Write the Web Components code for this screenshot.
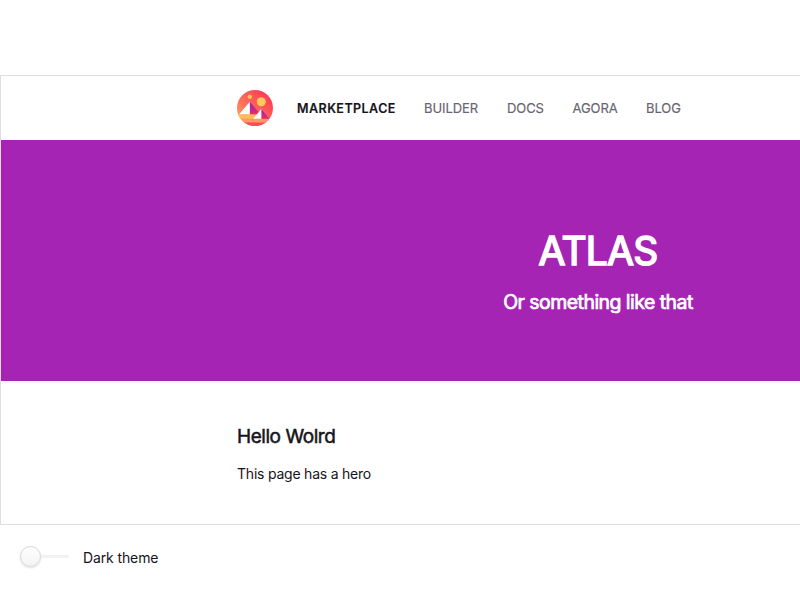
<!DOCTYPE html>
<html lang="en"><head><meta charset="utf-8"><title>Atlas</title>
<style>
html,body{margin:0;background:#fff;overflow:hidden}
body{width:800px;height:600px;font-family:Inter,"Liberation Sans",sans-serif;color:#16141a;font-size:14px}
</style></head><body>
<atlas-story>
<page-frame>
<nav-bar slot="nav">
<brand-logo slot="logo"></brand-logo>
<nav-item active style="--w:98.5px">MARKETPLACE</nav-item>
<nav-item style="--w:54.5px">BUILDER</nav-item>
<nav-item style="--w:37px">DOCS</nav-item>
<nav-item style="--w:45px">AGORA</nav-item>
<nav-item style="--w:35px">BLOG</nav-item>
</nav-bar>
<hero-banner slot="hero"><span slot="title">ATLAS</span><span slot="subtitle">Or something like that</span></hero-banner>
<page-content><span slot="title">Hello Wolrd</span><span>This page has a hero</span></page-content>
</page-frame>
<theme-toggle slot="footer">Dark theme</theme-toggle>
</atlas-story>
<script>
const define=(name,html)=>customElements.define(name,class extends HTMLElement{
  constructor(){super();this.attachShadow({mode:'open'}).innerHTML=html;}
});
define('atlas-story',`<style>:host{display:block;padding-top:75px;width:800px;height:600px;box-sizing:border-box;overflow:hidden}</style><slot></slot><slot name="footer"></slot>`);
define('page-frame',`<style>:host{display:block;width:1196px;height:450px;box-sizing:border-box;border:1px solid #dedede}</style><slot name="nav"></slot><slot name="hero"></slot><slot></slot>`);
define('nav-bar',`<style>:host{display:flex;height:64px;align-items:center;padding-left:236px}
nav{display:flex;gap:28.5px;margin-left:24px;padding-top:2px}</style><slot name="logo"></slot><nav><slot></slot></nav>`);
define('nav-item',`<style>:host{display:block;width:var(--w);white-space:nowrap;font-size:13px;line-height:18px;color:#676370;letter-spacing:-.08px;-webkit-text-stroke:.15px currentColor}
:host([active]){font-weight:600;color:#16141a;font-size:12.5px;line-height:20px;letter-spacing:.45px}</style><slot></slot>`);
define('brand-logo',`<style>:host{display:block;width:36px;height:36px}svg{display:block}</style>
<svg width="36" height="36" viewBox="0 0 36 36">
<defs>
<linearGradient id="bg" x1=".15" y1=".85" x2=".85" y2=".15"><stop offset="0" stop-color="#ff9a5a"/><stop offset=".35" stop-color="#ff7059"/><stop offset="1" stop-color="#ff3d56"/></linearGradient>
<linearGradient id="shade" x1="0" y1="0" x2="0" y2="1"><stop offset="0" stop-color="#a524b3"/><stop offset=".4" stop-color="#b0269f"/><stop offset="1" stop-color="#ee2c62"/></linearGradient>
<clipPath id="disc"><circle cx="18" cy="18" r="18"/></clipPath></defs>
<g clip-path="url(#disc)"><rect width="36" height="36" fill="url(#bg)"/>
<path fill="#ff4a55" d="M7 32h22v4H7z"/><path fill="#fc9965" d="M3 28.8h30l-4 3.8H7z"/>
<path fill="#ffbc5b" d="M0 24.3h24v4.5H0z"/>
<path fill="url(#shade)" d="M12.8 11.7v12.6h10.7z"/><path fill="#fff" d="M12.8 11.7v12.6H2.1z"/>
<path fill="url(#shade)" d="M24.3 18.9v9.9h8.2z"/><path fill="#fff" d="M24.3 18.9v9.9h-8.1z"/>
<circle cx="24.3" cy="11.7" r="4.5" fill="#ffc95b"/><circle cx="12.8" cy="6.8" r="2.2" fill="#ffc95b"/></g></svg>`);
define('hero-banner',`<style>:host{display:flex;flex-direction:column;align-items:center;height:241px;box-sizing:border-box;padding-top:85px;background:#a524b3;color:#fff}
h1{margin:0;font-size:39px;line-height:52px;font-weight:400;letter-spacing:-.8px;-webkit-text-stroke:1.6px currentColor}
h2{margin:12px 0 0;font-size:19.5px;line-height:26px;font-weight:400;letter-spacing:-.55px;-webkit-text-stroke:.7px currentColor}</style><h1><slot name="title"></slot></h1><h2><slot name="subtitle"></slot></h2>`);
define('page-content',`<style>:host{display:block;padding:43px 236px 0}
h2{margin:0;font-size:19px;line-height:26px;font-weight:400;letter-spacing:-.45px;-webkit-text-stroke:.5px currentColor}
p{margin:14px 0 0;font-size:14px;line-height:20px;letter-spacing:-.22px}</style><h2><slot name="title"></slot></h2><p><slot></slot></p>`);
define('theme-toggle',`<style>:host{display:flex;align-items:flex-start;padding:21px 0 0 20px;font-size:14px;line-height:24px;letter-spacing:-.12px}
.track{display:flex;align-items:center;width:49px;height:21px;margin-right:14px}
.knob{box-sizing:border-box;width:21px;height:21px;flex:none;border-radius:50%;border:1px solid #d8d8d9;background:linear-gradient(#fff,#f3f3f3);box-shadow:0 1px 2px rgba(34,36,38,.15)}
.line{flex:1;height:3px;background:#f2f2f2;border-radius:0 2px 2px 0}</style><span class="track"><span class="knob"></span><span class="line"></span></span><span><slot></slot></span>`);
</script></body></html>
